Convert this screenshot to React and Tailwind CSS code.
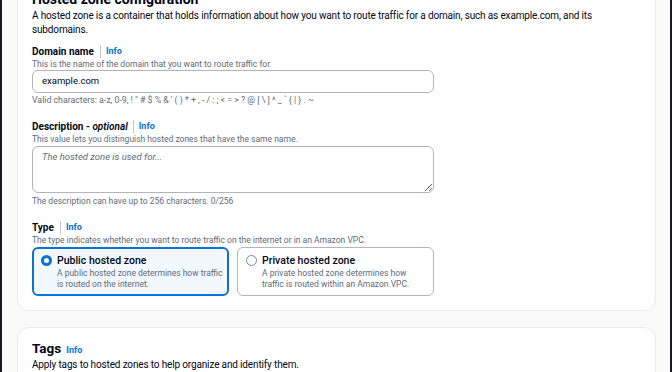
import React from "react";

function Label({ children }) {
  return (
    <div className="flex items-center h-[13px] leading-[13px]">
      <span className="text-[10px] font-bold text-[#000716]">{children}</span>
      <span className="ml-[6px] mr-[5px] h-[13px] w-px bg-[#c6c6cd]" />
      <span className="text-[9px] font-bold text-[#0972d3]">Info</span>
    </div>
  );
}

function Hint({ children }) {
  return <div className="text-[8.5px] leading-[12px] h-[12px] text-[#5f6b7a] whitespace-nowrap">{children}</div>;
}

function RadioCard({ selected, title, desc }) {
  return (
    <div
      className={
        "flex-1 basis-0 min-w-0 rounded-[6px] flex gap-[5px] " +
        (selected ? "border-2 border-[#0972d3] bg-[#f2f8fd] px-[7px] pt-[5px]" : "border border-[#b4b4bb] bg-white px-[8px] pt-[6px]")
      }
    >
      <div className="pt-[1px]">
        {selected ? (
          <div className="w-[11px] h-[11px] rounded-full border-[3.5px] border-[#0972d3] bg-white" />
        ) : (
          <div className="w-[11px] h-[11px] rounded-full border border-[#7d8998] bg-white" />
        )}
      </div>
      <div>
        <div className="text-[10.5px] leading-[14px] text-[#000716] font-medium">{title}</div>
        <div className="text-[8.5px] leading-[11px] text-[#5f6b7a] whitespace-nowrap">{desc}</div>
      </div>
    </div>
  );
}

export default function App() {
  return (
    <div
      className="w-[672px] h-[372px] overflow-hidden bg-[#fafafa] border-l-2 border-r-2 border-[#16191f]"
      style={{ fontFamily: 'Roboto, "Noto Sans", sans-serif' }}
    >
      <div className="pl-[15px] pr-[14px] -mt-[32px]">
        <div className="bg-white border border-[#e9ebed] rounded-[12px] px-[14px] pt-[20px] pb-[14px]">
          <div className="text-[14px] leading-[20px] font-bold text-[#000716]">Hosted zone configuration</div>
          <div className="text-[10px] tracking-[-0.15px] leading-[14px] text-[#000716] w-[580px]">
            A hosted zone is a container that holds information about how you want to route traffic for a domain, such as example.com, and its subdomains.
          </div>

          <div className="w-[402px]">
            <div className="mt-[8px]">
              <Label>Domain name</Label>
              <Hint>This is the name of the domain that you want to route traffic for.</Hint>
              <div className="h-[23px] rounded-[6px] border border-[#b4b4bb] flex items-center px-[9px] text-[9.5px] text-[#000716]">
                example.com
              </div>
              <div className="mt-[1px] text-[8.75px] leading-[12px] text-[#5f6b7a] whitespace-nowrap">
                Valid characters: a-z, 0-9, ! " # $ % &amp; ' ( ) * + , - / : ; &lt; = &gt; ? @ [ \ ] ^ _ ` {"{"} | {"}"} . ~
              </div>
            </div>

            <div className="mt-[14px]">
              <div className="flex items-center h-[13px] leading-[13px]">
                <span className="text-[10px] font-bold text-[#000716]">
                  Description - <i className="font-semibold">optional</i>
                </span>
                <span className="ml-[5px] mr-[5px] h-[13px] w-px bg-[#c6c6cd]" />
                <span className="text-[9px] font-bold text-[#0972d3]">Info</span>
              </div>
              <Hint>This value lets you distinguish hosted zones that have the same name.</Hint>
              <textarea
                className="block mt-[1px] w-full h-[47px] rounded-[6px] border border-[#b4b4bb] px-[9px] py-[3px] text-[9.5px] leading-[14px] placeholder:italic placeholder:text-[#5f6b7a] outline-none resize-y"
                placeholder="The hosted zone is used for..."
              />
              <div className="mt-[2px]">
                <Hint>The description can have up to 256 characters. 0/256</Hint>
              </div>
            </div>

            <div className="mt-[14px]">
              <Label>Type</Label>
              <Hint>The type indicates whether you want to route traffic on the internet or in an Amazon VPC.</Hint>
              <div className="mt-[1px] flex gap-[8px] h-[49px]">
                <RadioCard
                  selected
                  title="Public hosted zone"
                  desc={<>A public hosted zone determines how traffic<br />is routed on the internet.</>}
                />
                <RadioCard
                  title="Private hosted zone"
                  desc={<>A private hosted zone determines how<br />traffic is routed within an Amazon VPC.</>}
                />
              </div>
            </div>
          </div>
        </div>

        <div className="mt-[16px] bg-white border border-[#e9ebed] rounded-[12px] px-[14px] pt-[10px] h-[80px]">
          <div className="flex items-baseline gap-[5px]">
            <span className="text-[13.5px] leading-[20px] font-bold text-[#000716]">Tags</span>
            <span className="text-[9px] font-bold text-[#0972d3]">Info</span>
          </div>
          <div className="text-[10px] tracking-[-0.15px] leading-[14px] text-[#000716]">Apply tags to hosted zones to help organize and identify them.</div>
        </div>
      </div>
    </div>
  );
}
